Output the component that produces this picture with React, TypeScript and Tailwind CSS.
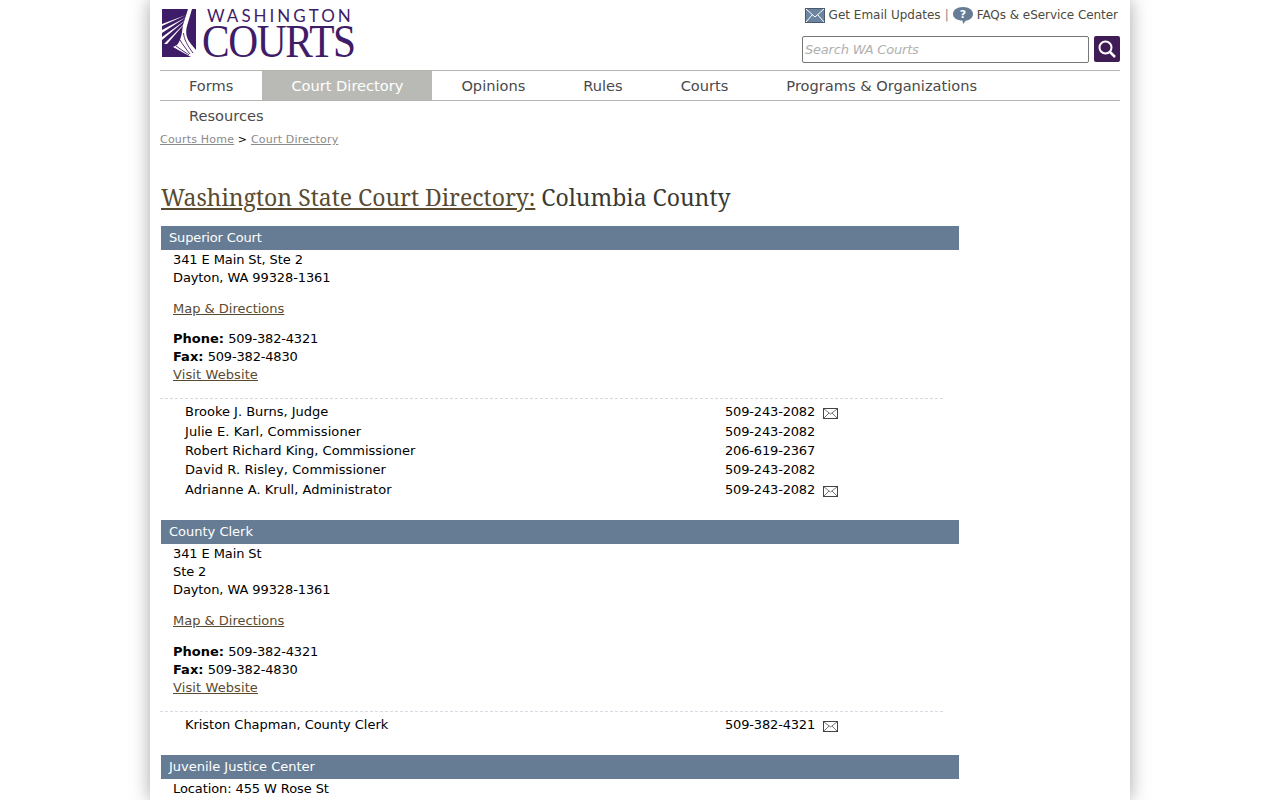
const navItems = ["Forms", "Court Directory", "Opinions", "Rules", "Courts", "Programs & Organizations"];

function LogoMark() {
	return (
		<svg width="34" height="48" viewBox="0 0 34 48" className="shrink-0">
			<rect width="34" height="48" fill="#3f1c68" />
			<path d="M24 6 L0 15 L0 17 Z M24.500 8 L0 21 L0 24 Z M25 10 L0 28 L0 31 Z M25 12 L2 35 L5 35 Z" fill="#fff" />
			<path d="M26 0 L30 0 L25 17 C23 25 25 30 29 35 L34 41 L34 48 L29 48 L11 38 L15 36 C20 30 20 22 21 16 Z" fill="#fff" />
			<path d="M21.500 24 C22 30 25 36 31 44 M18 31 C21 36 24 40 28 45 M14 37 L27 46" fill="none" stroke="#3f1c68" strokeWidth="0.9" />
		</svg>
	);
}

function MailIcon({ className }: { className?: string }) {
	return (
		<svg width="15" height="11" viewBox="0 0 15 11" className={className}>
			<rect x="0.5" y="0.5" width="14" height="10" fill="#fff" stroke="#444" />
			<path d="M1 1 L7.5 6 L14 1 M1 10 L6 5 M14 10 L9 5" fill="none" stroke="#555" strokeWidth="0.8" />
		</svg>
	);
}

function SectionBar({ title, className }: { title: string; className?: string }) {
	return <div className={`ml-px w-[798px] h-6 bg-[#667c94] pl-2 text-white text-[13px] leading-6 ${className ?? ""}`}>{title}</div>;
}

function Person({
	name,
	phone,
	mail,
	className,
	nameClass,
	phoneClass,
}: {
	name: string;
	phone: string;
	mail?: boolean;
	className?: string;
	nameClass?: string;
	phoneClass?: string;
}) {
	return (
		<div className={`flex items-center text-[13px] text-black ${className ?? "h-[19px]"}`}>
			<span className={`w-[565px] pl-[25px] ${nameClass ?? ""}`}>{name}</span>
			<span className={`w-[98px] tracking-[-0.17px] ${phoneClass ?? ""}`}>{phone}</span>
			{mail && <MailIcon className="mt-[3px]" />}
		</div>
	);
}

export default function App() {
	return (
		<div className="h-[800px] overflow-hidden bg-white">
			<div className="mx-auto w-[980px] h-[800px] overflow-hidden bg-white px-[10px] shadow-[0_0_18px_rgba(0,0,0,0.35)] font-['DejaVu_Sans',sans-serif]">
				<header className="flex justify-between h-[70px]">
					<div className="flex pl-[2px] pt-[9px] gap-[8px] text-[#3f1c68]">
						<LogoMark />
						<div className="flex flex-col">
							<span className="ml-[3px] text-[17px] leading-[14px] tracking-[3px] font-['Lato',sans-serif]">WASHINGTON</span>
							<span className="-ml-[2px] mt-[1px] origin-left scale-x-[0.9] text-[46px] leading-[35px] tracking-[-1.5px] font-['Liberation_Serif',serif]">COURTS</span>
						</div>
					</div>
					<div className="flex flex-col items-end">
						<div className="flex items-center h-[30px] text-xs text-[#4d4a3e]">
							<svg width="20" height="15" viewBox="0 0 20 15" className="mr-[4px]">
								<rect x="0.5" y="0.5" width="19" height="14" fill="#6b84a0" stroke="#4a5a6c" />
								<path d="M1 1 L10 9 L19 1 M1 14 L7.5 6.5 M19 14 L12.5 6.5" fill="none" stroke="#fff" strokeWidth="1" />
							</svg>
							<span>Get Email Updates</span>
							<span className="ml-[4px] mr-[4px] text-[#888]">|</span>
							<svg width="20" height="17" viewBox="0 0 20 17" className="mr-[4px]">
								<path d="M10 0 C16 0 20 3 20 7 C20 11 16 13.500 13 13.500 L10 17 L9.500 13.500 C4 13.500 0 11 0 7 C0 3 4 0 10 0 Z" fill="#667c94" />
								<text x="10" y="11" textAnchor="middle" fontSize="11" fontWeight="700" fill="#fff" fontFamily="DejaVu Sans">?</text>
							</svg>
							<span className="mr-[2px] tracking-[-0.05px]">FAQs &amp; eService Center</span>
						</div>
						<div className="flex items-start gap-[5px] mt-[6px]">
							<div className="w-[287px] h-[27px] border border-[#777] rounded-[2px] bg-white pl-[2px] text-[13px] leading-[25px] italic tracking-[-0.2px] text-[#b0b0b0]">Search WA Courts</div>
							<div className="w-[26px] h-[26px] rounded-[2px] bg-[#3f1c55] flex items-center justify-center">
								<svg width="20" height="20" viewBox="0 0 20 20" fill="none" stroke="#fff">
									<circle cx="8.500" cy="8.500" r="6" strokeWidth="2" />
									<path d="M13 13 L18 18" strokeWidth="2.500" />
								</svg>
							</div>
						</div>
					</div>
				</header>

				<nav className="text-[14.6px] text-[#4a4a4a]">
					<ul className="flex h-[31px] border-y border-[#b5b5b0]">
						{navItems.map((item) => (
							<li key={item} className={`px-[29px] leading-[29px] ${item === "Court Directory" ? "bg-[#b9bab5] text-white" : ""}`}>
								{item}
							</li>
						))}
					</ul>
					<div className="px-[29px] h-[30px] leading-[30px]">Resources</div>
				</nav>

				<div className="text-[11px] leading-[16px] mt-px tracking-[0.2px] text-black">
					<a className="text-[#8a8a8a] underline">Courts Home</a> &gt; <a className="text-[#8a8a8a] underline">Court Directory</a>
				</div>

				<h1 className="mt-[33px] ml-px text-[23px] leading-[32px] text-[#3a3a34] font-['Noto_Serif','DejaVu_Serif',serif]">
					<a className="text-[#5a4a2f] underline">Washington State Court Directory:</a> Columbia County
				</h1>

				<div className="mt-[13px] text-[13px] leading-[18px] text-black">
					<SectionBar title="Superior Court" className="tracking-[-0.15px]" />
					<div className="pl-[13px] pt-px">
						<p className="tracking-[-0.1px]">341 E Main St, Ste 2<br />Dayton, WA 99328-1361</p>
						<p className="mt-[13px]"><a className="text-[#5a4a2f] underline">Map &amp; Directions</a></p>
						<p className="mt-[12px]">
							<b>Phone:</b> <span className="tracking-[-0.17px]">509-382-4321</span><br />
							<b>Fax:</b> <span className="tracking-[-0.17px]">509-382-4830</span><br />
							<a className="text-[#5a4a2f] underline tracking-[0.1px]">Visit Website</a>
						</p>
					</div>
					<div className="mt-[14px] w-[783px] border-t border-dashed border-[#d6dae2]" />
					<div className="pt-[3px]">
						<Person name="Brooke J. Burns, Judge" phone="509-243-2082" mail className="h-5" phoneClass="-mt-px" />
						<Person name="Julie E. Karl, Commissioner" phone="509-243-2082" nameClass="tracking-[0.08px]" />
						<Person name="Robert Richard King, Commissioner" phone="206-619-2367" />
						<Person name="David R. Risley, Commissioner" phone="509-243-2082" nameClass="tracking-[0.1px]" />
						<Person name="Adrianne A. Krull, Administrator" phone="509-243-2082" mail className="h-[21px] pt-px" nameClass="tracking-[0.03px]" />
					</div>

					<div className="mt-[20px]">
						<SectionBar title="County Clerk" />
					</div>
					<div className="pl-[13px] pt-px">
						<p className="tracking-[-0.1px]">341 E Main St<br />Ste 2<br />Dayton, WA 99328-1361</p>
						<p className="mt-[13px]"><a className="text-[#5a4a2f] underline">Map &amp; Directions</a></p>
						<p className="mt-[13px]">
							<b>Phone:</b> <span className="tracking-[-0.17px]">509-382-4321</span><br />
							<b>Fax:</b> <span className="tracking-[-0.17px]">509-382-4830</span><br />
							<a className="text-[#5a4a2f] underline tracking-[0.1px]">Visit Website</a>
						</p>
					</div>
					<div className="mt-[14px] w-[783px] border-t border-dashed border-[#d6dae2]" />
					<div className="pt-[3px]">
						<Person name="Kriston Chapman, County Clerk" phone="509-382-4321" mail className="h-5" nameClass="tracking-[-0.04px]" phoneClass="-mt-px" />
					</div>

					<div className="mt-[20px]">
						<SectionBar title="Juvenile Justice Center" />
					</div>
					<div className="pl-[13px] pt-px">
						<p className="tracking-[-0.1px]">Location: 455 W Rose St</p>
					</div>
				</div>
			</div>
		</div>
	);
}
